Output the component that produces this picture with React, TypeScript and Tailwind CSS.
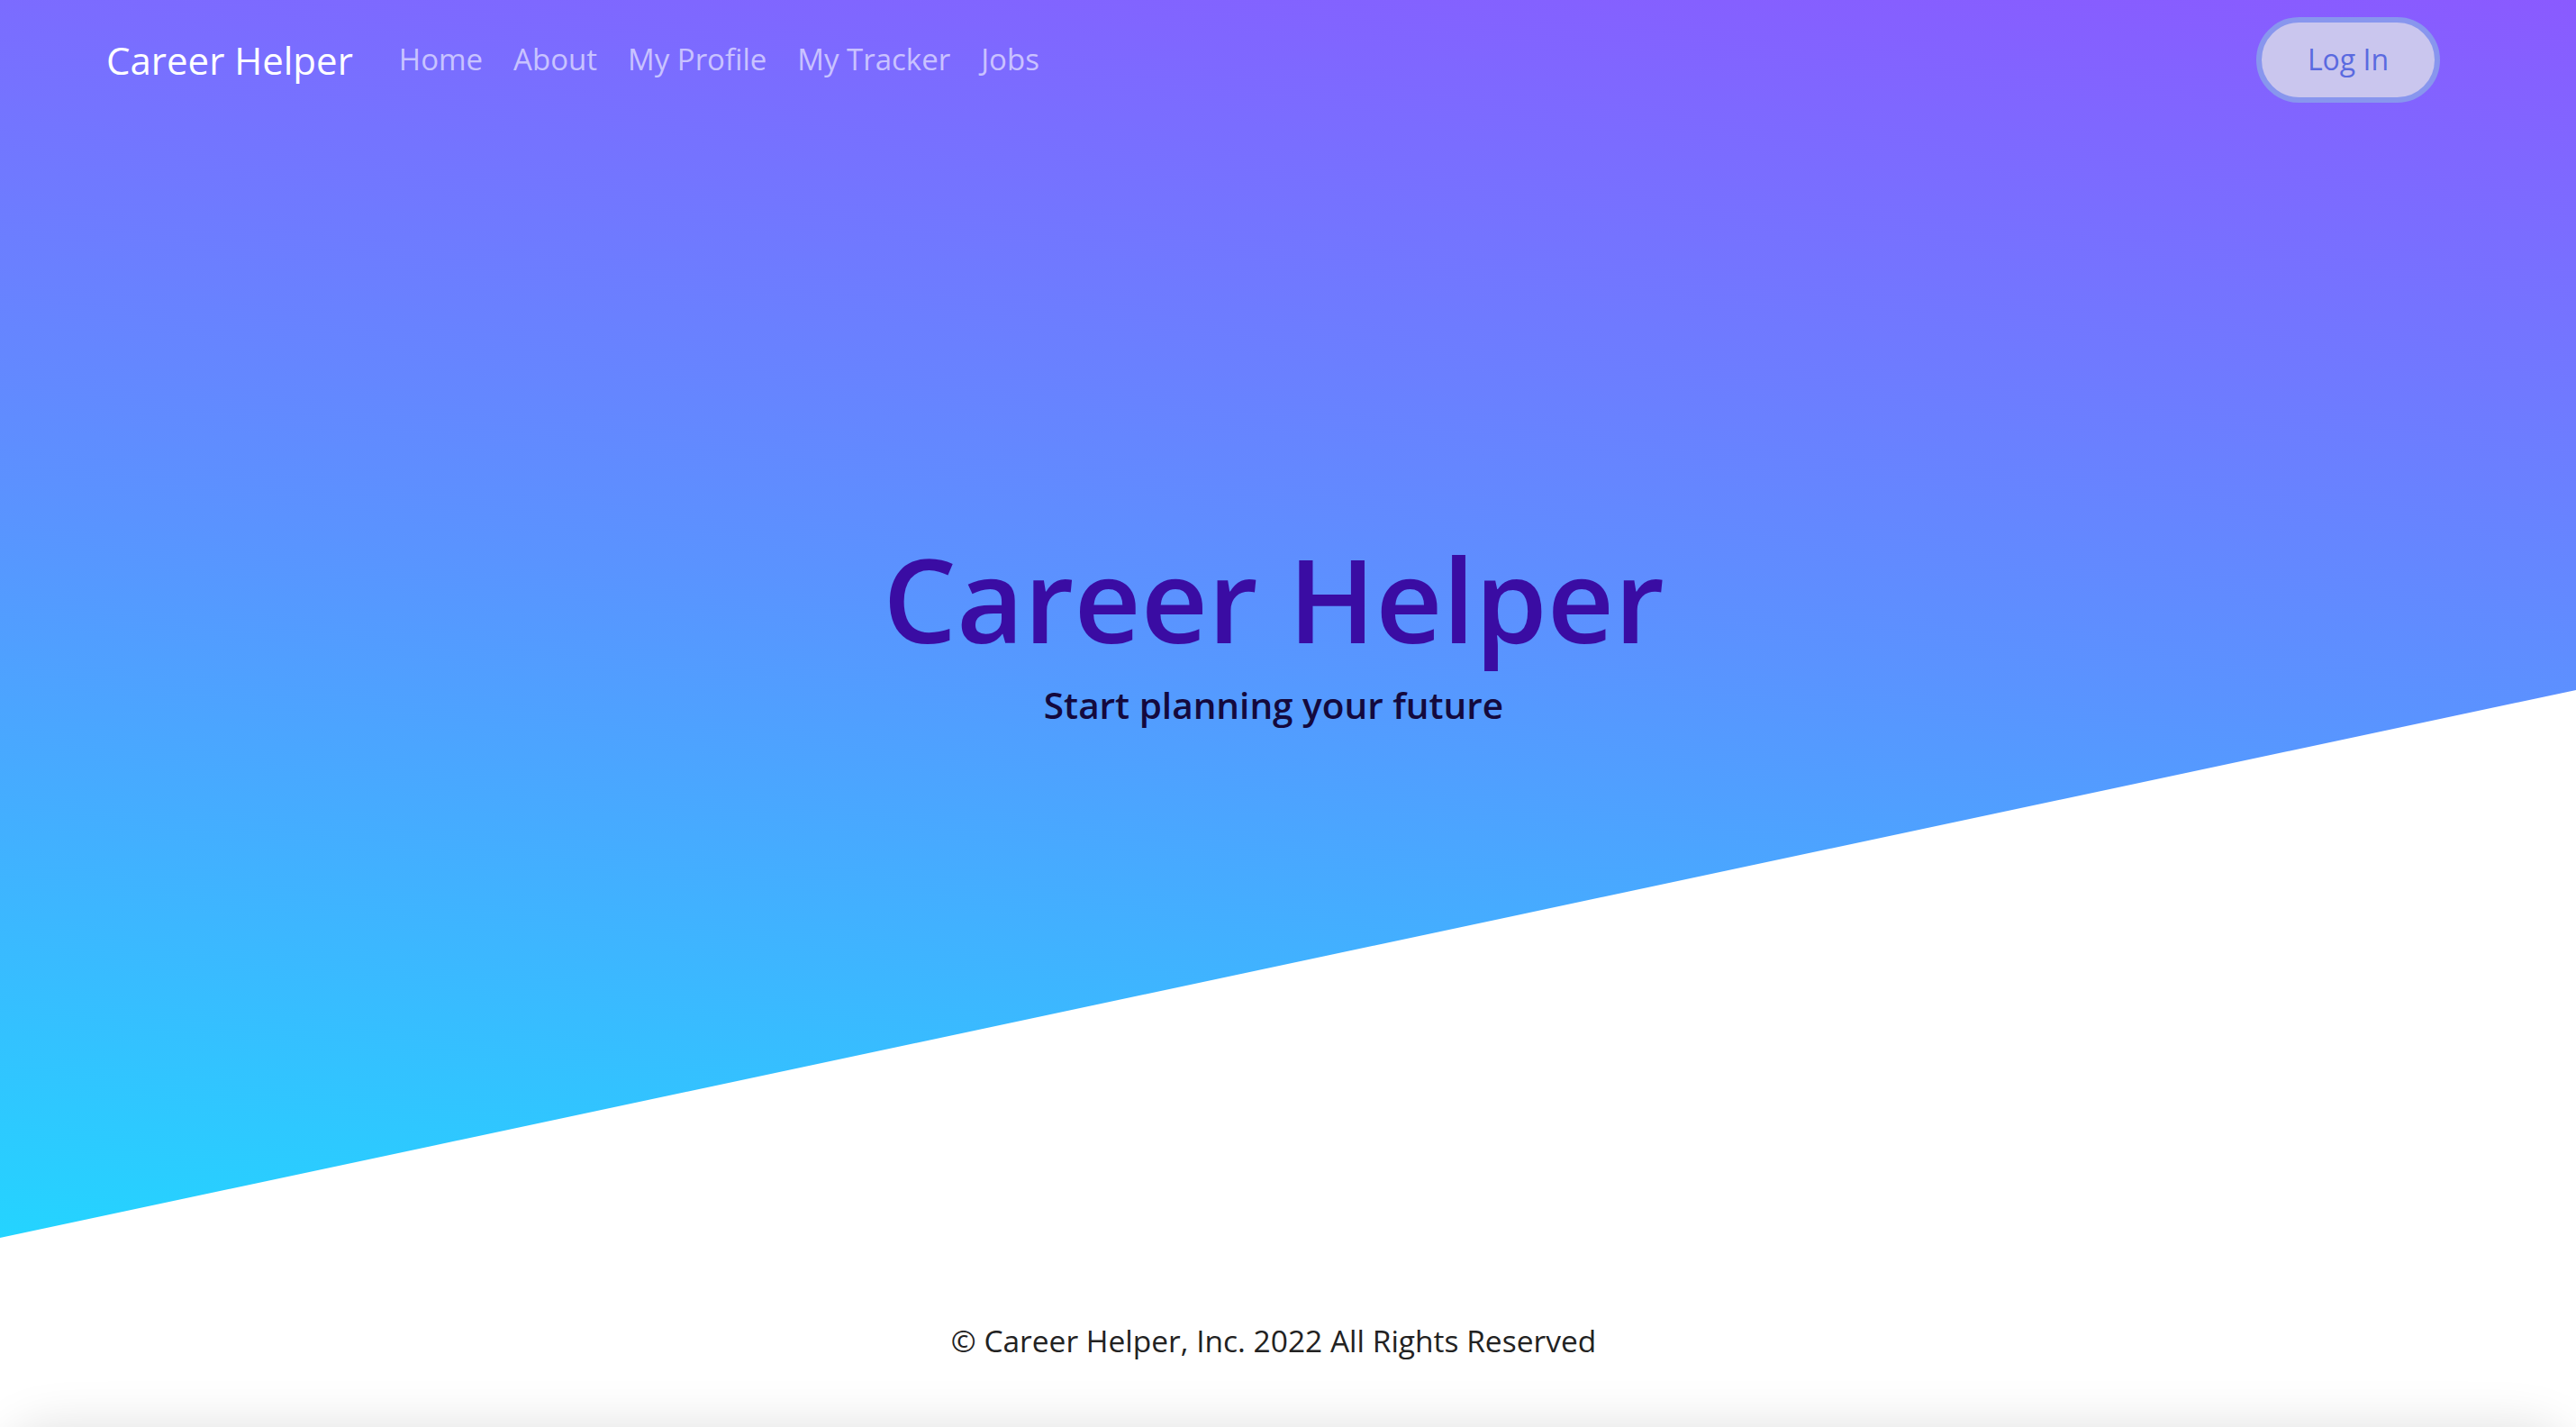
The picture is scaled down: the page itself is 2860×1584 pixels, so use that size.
import React from "react";

export default function App() {
  const font = { fontFamily: '"Open Sans", "Noto Sans", sans-serif' };
  return (
    <div className="w-[2860px] h-[1584px] overflow-hidden bg-white flex flex-col" style={font}>
      <section className="h-[1374px] shrink-0 w-full bg-[linear-gradient(5deg,#24d4ff_0%,#5a93ff_50%,#8a5aff_100%)] [clip-path:polygon(0_0,100%_0,100%_55.75%,0_100%)]">
        <div className="w-[2828px] h-full flex flex-col">
          <nav className="h-[132px] shrink-0 flex items-center pl-[118px] pr-[119px]">
            <span className="text-[42px] text-white font-medium">Career Helper</span>
            <div className="flex items-center gap-[34px] ml-[51px] text-[33px] text-white/60">
              <a>Home</a>
              <a>About</a>
              <a>My Profile</a>
              <a>My Tracker</a>
              <a>Jobs</a>
            </div>
            <button className="ml-auto w-[204px] h-[95px] rounded-full border-[6px] border-[#8896ee] bg-[#cac6ee] text-[#5a6ae0] text-[32px]">
              Log In
            </button>
          </nav>
          <div className="flex flex-col items-center mt-[457px]">
            <h1 className="text-[129px] leading-[150px] font-semibold text-[#3a0ca3]">Career Helper</h1>
            <p className="mt-[16px] text-[40.5px] leading-[56px] font-semibold text-[#14093d]">Start planning your future</p>
          </div>
        </div>
      </section>
      <footer className="h-[210px] shrink-0 w-[2828px] flex flex-col items-center pt-[89px]">
        <p className="text-[33.5px] leading-[50px] text-[#222]">© Career Helper, Inc. 2022 All Rights Reserved</p>
      </footer>
      <div className="h-[200px] shrink-0 w-full rounded-t-[60px] bg-white shadow-[0_0_55px_rgba(0,0,0,0.13)]" />
    </div>
  );
}
